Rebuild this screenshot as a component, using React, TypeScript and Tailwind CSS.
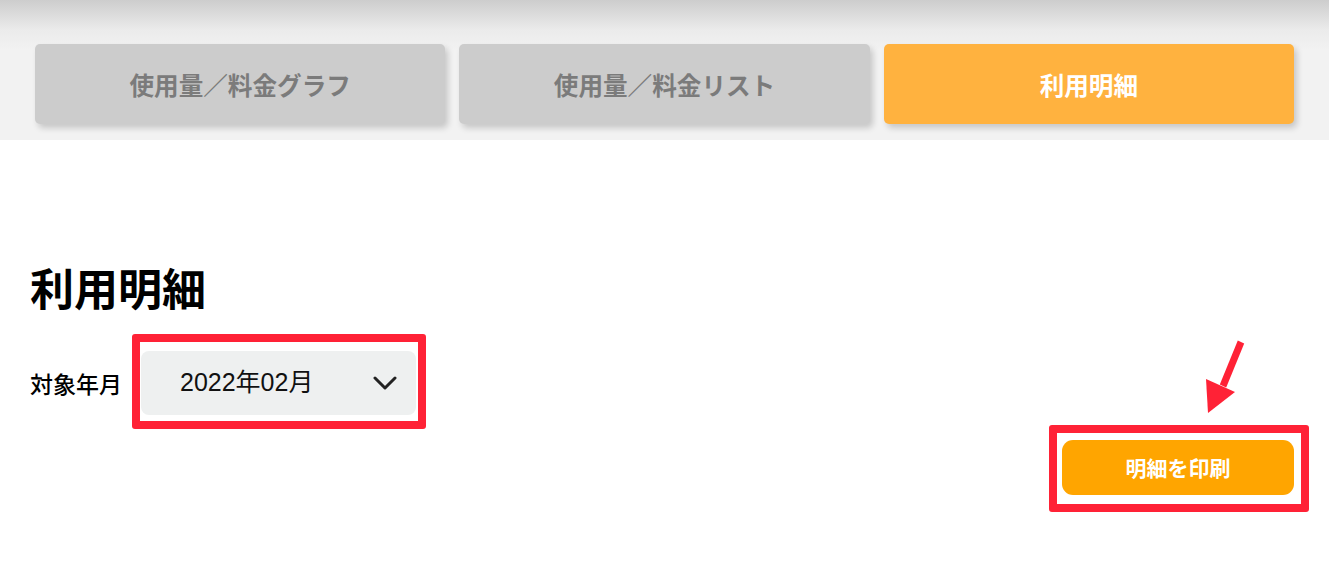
const font = "font-['Noto_Sans_CJK_JP','Noto_Sans',sans-serif]";

const tabs = [
  { label: "使用量／料金グラフ", active: false },
  { label: "使用量／料金リスト", active: false },
  { label: "利用明細", active: true },
];

function Chevron() {
  return (
    <svg width="24" height="14" viewBox="0 0 24 14" fill="none">
      <path d="M2 2l10 10L22 2" stroke="#222" strokeWidth="3" strokeLinecap="round" strokeLinejoin="round" />
    </svg>
  );
}

function Arrow() {
  return (
    <svg width="44" height="80" viewBox="0 0 44 80" className="absolute left-[142px] top-[-102px]">
      <path d="M33.8 2.6 L40.2 5.4 L22.2 49.4 L15.8 46.6 Z" fill="#ff2236" />
      <path d="M2 41 L31 54 L4 75 Z" fill="#ff2236" />
    </svg>
  );
}

export default function App() {
  return (
    <div className={`w-[1329px] h-[572px] bg-white overflow-hidden ${font}`}>
      {/* tab header */}
      <div className="h-[140px] bg-[linear-gradient(to_bottom,#cdcdcd_0px,#ebebeb_30px,#f2f2f2_50px)] flex gap-[14px] px-[35px] pt-[44px]">
        {tabs.map((t) => (
          <div
            key={t.label}
            className={`flex-1 h-[80px] rounded-[5px] flex items-center justify-center text-[24.6px] font-bold shadow-[3px_4px_6px_rgba(0,0,0,0.18)] ${
              t.active ? "bg-[#ffb23f] text-white" : "bg-[#cccccc] text-[#7b7b7b]"
            }`}
          >
            {t.label}
          </div>
        ))}
      </div>

      <main className="px-[30px] pt-[118px]">
        <h1 className="text-[44px] leading-[58px] font-bold text-black">利用明細</h1>

        <div className="flex items-center gap-[19px] mt-[35px]">
          <span className="text-[23px] font-medium text-black">対象年月</span>
          <div className="relative">
            <div className="w-[275px] h-[64px] rounded-[8px] bg-[#eef0f0] flex items-center justify-between pl-[39px] pr-[19px]">
              <span className="text-[25px] text-[#111] font-['Liberation_Sans','Noto_Sans_CJK_JP',sans-serif]">2022年02月</span>
              <Chevron />
            </div>
            <div className="absolute left-[-9px] right-[-10px] top-[-17px] bottom-[-14px] border-[8px] border-[#ff2236] rounded-[3px] pointer-events-none" />
          </div>
        </div>

        <div className="flex justify-end pr-[5px] mt-[25px]">
          <div className="relative">
            <button className="w-[232px] h-[55px] rounded-[11px] bg-[#ffa500] text-white text-[21px] font-bold">
              明細を印刷
            </button>
            <div className="absolute left-[-13px] right-[-15px] top-[-15px] bottom-[-17px] border-[8px] border-[#ff2236] rounded-[3px] pointer-events-none" />
            <Arrow />
          </div>
        </div>
      </main>
    </div>
  );
}
